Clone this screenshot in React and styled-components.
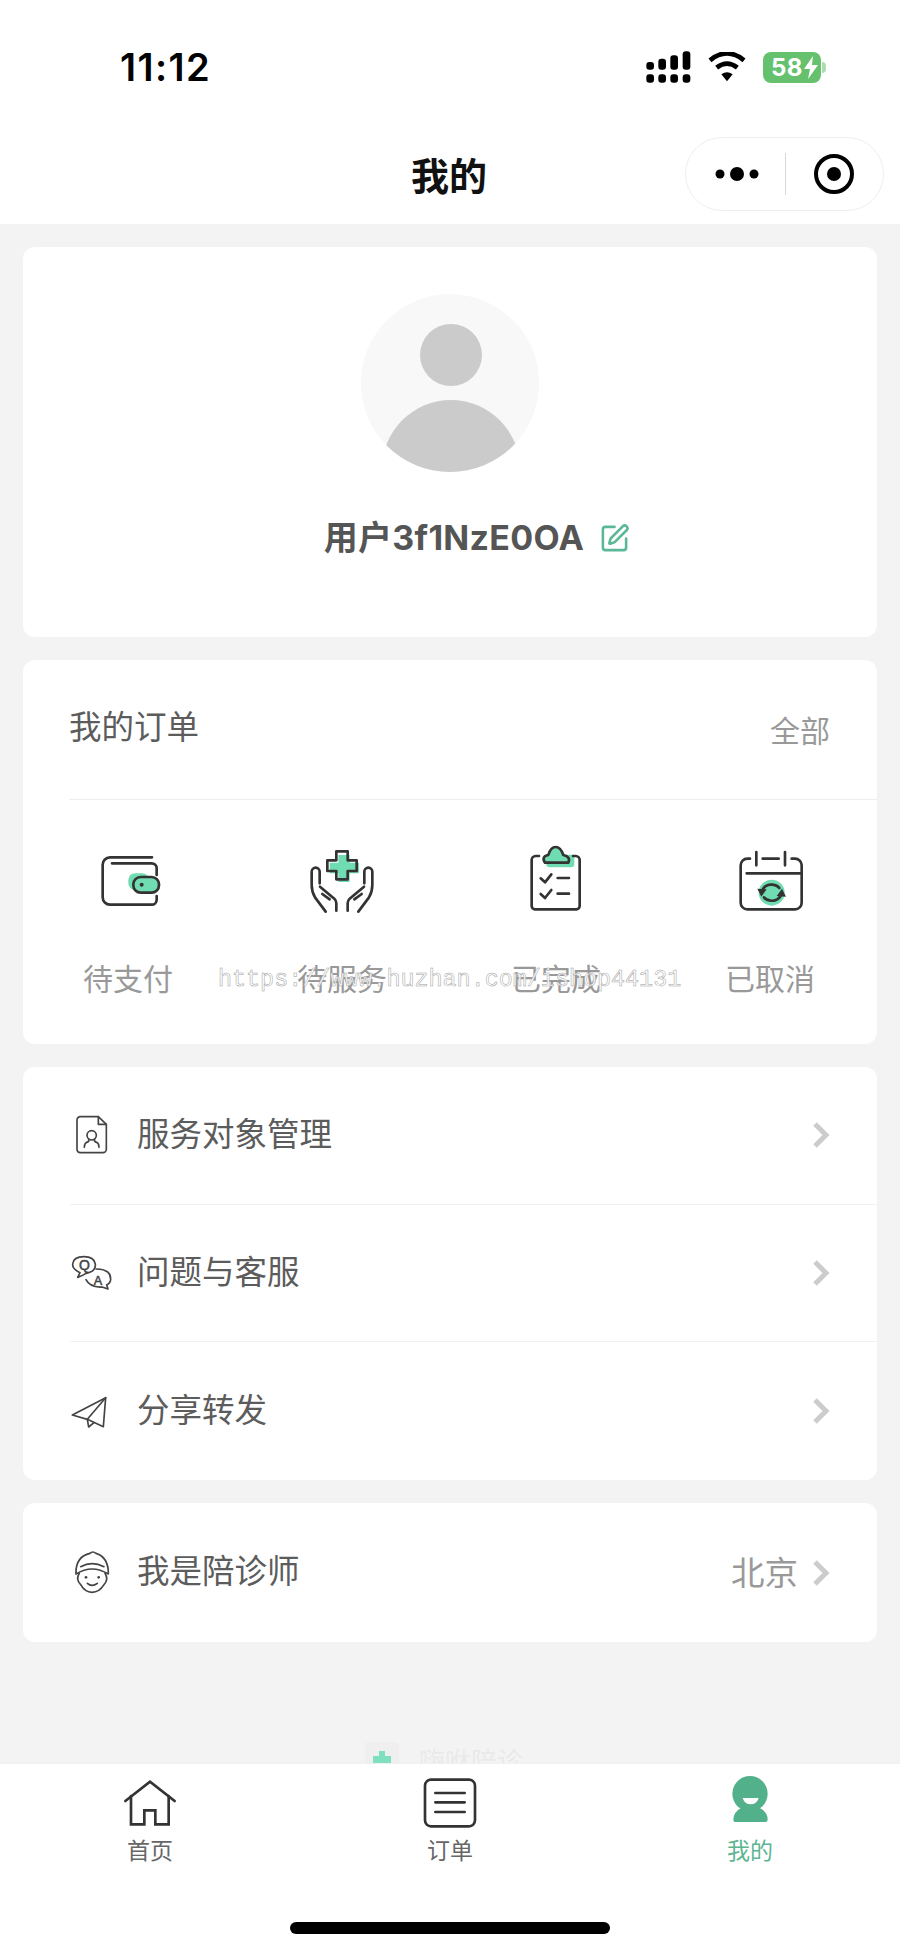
import React from "react";
import styled, { createGlobalStyle } from "styled-components";
import { SquarePen } from "lucide-react";

const Global = createGlobalStyle`
  html, body { margin: 0; padding: 0; background: #f3f3f3; }
  body { font-family: "Noto Sans CJK SC", "Noto Sans", sans-serif; }
  * { box-sizing: border-box; }
`;

const INK = "#333";
const MINT = "#6fdcb2";

const Page = styled.div`
  position: relative;
  width: 900px;
  height: 1951px;
  display: flex;
  flex-direction: column;
  background: #f3f3f3;
  overflow: hidden;
`;
const Header = styled.header`
  background: #fff;
  flex: none;
`;
const StatusBar = styled.div`
  height: 124px;
  padding: 10px 74px 0 120px;
  display: flex;
  align-items: center;
  justify-content: space-between;
`;
const Clock = styled.span`
  font-family: Inter, sans-serif;
  font-weight: 600;
  font-size: 38px;
  letter-spacing: 1.4px;
  color: #000;
`;
const StatusIcons = styled.div`
  display: flex;
  align-items: center;
  gap: 17px;
`;
const Battery = styled.div`
  position: relative;
  width: 58px;
  height: 31px;
  border-radius: 8px;
  background: #66c16f;
  margin-right: 5px;
  display: flex;
  align-items: center;
  padding-left: 8px;
  color: #fff;
  font-family: Inter, sans-serif;
  font-weight: 700;
  font-size: 24px;
  letter-spacing: 0.5px;
  &::after {
    content: "";
    position: absolute;
    right: -5px;
    top: 10px;
    width: 4px;
    height: 11px;
    border-radius: 0 4px 4px 0;
    background: #a9dcae;
  }
`;
const NavBar = styled.div`
  height: 100px;
  display: grid;
  grid-template-columns: 1fr auto 1fr;
  align-items: center;
  padding: 0 16px;
`;
const NavTitle = styled.h1`
  grid-column: 2;
  margin: 0;
  font-size: 38px;
  font-weight: 700;
  color: #111;
  line-height: 1;
  position: relative;
  left: -1px;
`;
const Capsule = styled.div`
  grid-column: 3;
  justify-self: end;
  width: 199px;
  height: 74px;
  border: 1px solid #eeeeee;
  border-radius: 37px;
  background: #fff;
  display: flex;
  align-items: center;
`;
const CapsuleSide = styled.div`
  flex: 1;
  height: 100%;
  display: flex;
  align-items: center;
  justify-content: center;
  & + & {
    position: relative;
    &::before {
      content: "";
      position: absolute;
      left: 0;
      top: 15px;
      bottom: 15px;
      width: 1px;
      background: #d8d8d8;
    }
  }
`;
const Main = styled.main`
  flex: 1;
  min-height: 0;
  overflow: hidden;
  padding: 23px 23px 0;
  display: flex;
  flex-direction: column;
  gap: 23px;
`;
const Card = styled.section`
  flex: none;
  background: #fff;
  border-radius: 12px;
`;
const ProfileCard = styled(Card)`
  height: 390px;
  padding-top: 47px;
  display: flex;
  flex-direction: column;
  align-items: center;
`;
const NameRow = styled.div`
  margin-top: 39px;
  display: flex;
  align-items: center;
  gap: 15px;
  padding-left: 54px;
`;
const UserName = styled.span`
  font-family: Inter, "Noto Sans CJK SC", sans-serif;
  font-weight: 700;
  font-size: 34px;
  letter-spacing: 0.3px;
  line-height: 54px;
  color: #555;
`;
const OrderCard = styled(Card)`
  height: 384px;
`;
const OrderHead = styled.div`
  height: 140px;
  margin-left: 46px;
  padding: 0 47px 10px 0;
  border-bottom: 1px solid #eeeeee;
  display: flex;
  align-items: center;
  justify-content: space-between;
`;
const OrderTitle = styled.span`
  font-size: 32.5px;
  color: #5c5c5c;
`;
const OrderAll = styled.span`
  font-size: 30px;
  color: #999;
  position: relative;
  top: 4px;
`;
const OrderGrid = styled.div`
  display: grid;
  grid-template-columns: repeat(4, 214px);
  padding: 45px 0 0 0;
  margin-left: -2px;
`;
const OrderItem = styled.div`
  display: flex;
  flex-direction: column;
  align-items: center;
  gap: 40px;
`;
const OrderLabel = styled.span`
  font-size: 30px;
  line-height: 44px;
  color: #999;
`;
const MenuCard = styled(Card)``;
const Row = styled.div`
  height: ${(p) => p.$h}px;
  margin-left: 47px;
  padding-right: 47px;
  display: flex;
  align-items: center;
  border-bottom: ${(p) => (p.$line ? "1px solid #f0f0f0" : "none")};
`;
const RowIcon = styled.div`
  width: 67px;
  flex: none;
  display: flex;
  align-items: center;
`;
const RowText = styled.span`
  flex: 1;
  font-size: 32.5px;
  color: #5c5c5c;
  margin-bottom: 8px;
`;
const RowValue = styled.span`
  font-size: 33.5px;
  color: #999;
  margin: 0 14px 5px 0;
`;
const Brand = styled.div`
  flex: none;
  margin-top: 77px;
  display: flex;
  justify-content: center;
  gap: 20px;
  padding-right: 12px;
`;
const BrandMark = styled.div`
  width: 34px;
  height: 40px;
  background: #efefef;
  border-radius: 4px;
  display: flex;
  justify-content: center;
  padding-top: 9px;
`;
const BrandText = styled.span`
  font-size: 26px;
  line-height: 36px;
  color: #e9e9e9;
  filter: blur(0.6px);
`;
const TabBar = styled.nav`
  flex: none;
  height: 188px;
  background: #fff;
  border-top: 1px solid #f0f0f0;
  display: flex;
  flex-direction: column;
  align-items: center;
`;
const Tabs = styled.div`
  width: 100%;
  display: grid;
  grid-template-columns: repeat(3, 300px);
  padding-top: 9px;
`;
const Tab = styled.div`
  display: flex;
  flex-direction: column;
  align-items: center;
`;
const TabLabel = styled.span`
  font-size: 23px;
  line-height: 32px;
  color: ${(p) => (p.$active ? "#5cb592" : "#666")};
`;
const HomeBar = styled.div`
  margin-top: 57px;
  width: 320px;
  height: 12px;
  border-radius: 6px;
  background: #000;
`;
const Watermark = styled.div`
  position: absolute;
  left: 218px;
  top: 962px;
  font-family: "Liberation Mono", monospace;
  font-size: 23.4px;
  line-height: 36px;
  white-space: nowrap;
  color: rgba(255, 255, 255, 0.9);
  -webkit-text-stroke: 0.5px #a0a0a0;
`;

const Signal = () => (
  <svg width="46" height="32" viewBox="46 62 136 96">
    {[[49, 95], [85, 85], [121, 75], [158, 63]].map(([x, y]) => (
      <g key={x} fill="#000">
        <rect x={x} y={y} width="23" height={118 - y} rx="9" />
        <rect x={x} y="132" width="23" height="25" rx="9" />
      </g>
    ))}
  </svg>
);
const Wifi = () => (
  <svg width="38" height="30" viewBox="232 67 114 90" fill="none" stroke="#000" strokeWidth="14">
    <path d="M238 92 Q289 50 340 92" />
    <path d="M258 114 Q289 90 320 114" />
    <path d="M289 155 L272 134 Q289 122 306 134 Z" fill="#000" stroke="none" />
  </svg>
);
const Bolt = () => (
  <svg width="14" height="23" viewBox="0 0 14 23" style={{ marginLeft: 1 }}>
    <path d="M9 0 L0 13 H6 L4 23 L14 9 H8 Z" fill="#fff" />
  </svg>
);
const Target = () => (
  <svg width="40" height="40" viewBox="0 0 40 40">
    <circle cx="20" cy="20" r="18" fill="none" stroke="#000" strokeWidth="4" />
    <circle cx="20" cy="20" r="7" fill="#000" />
  </svg>
);
const Dots = () => (
  <svg width="44" height="16" viewBox="0 0 44 16" style={{ marginLeft: 4 }}>
    <circle cx="5" cy="8" r="4.5" fill="#000" />
    <circle cx="22" cy="8" r="7" fill="#000" />
    <circle cx="39" cy="8" r="4.5" fill="#000" />
  </svg>
);
const Avatar = () => (
  <svg width="178" height="178" viewBox="0 0 178 178">
    <defs>
      <clipPath id="avatarClip">
        <circle cx="89" cy="89" r="89" />
      </clipPath>
    </defs>
    <circle cx="89" cy="89" r="89" fill="#f8f8f8" />
    <circle cx="90" cy="61" r="31" fill="#cbcbcb" />
    <circle cx="90" cy="175" r="69" fill="#cbcbcb" clipPath="url(#avatarClip)" />
  </svg>
);

const Line = { fill: "none", stroke: INK, strokeWidth: 8, strokeLinecap: "round", strokeLinejoin: "round" };

const WalletIcon = () => (
  <svg width="70" height="70" viewBox="99 75 210 210">
    <rect x="205" y="160" width="62" height="50" rx="20" fill={MINT} />
    <path {...Line} d="M276 112 H150 a22 22 0 0 0 -22 22 V232 a22 22 0 0 0 22 22 H275 a15 15 0 0 0 15 -15 V228" />
    <path {...Line} d="M156 130 H275 a15 15 0 0 1 15 15 V165" />
    <rect {...Line} x="220" y="171" width="77" height="47" rx="22" fill={MINT} />
    <circle cx="245" cy="194" r="6" fill={INK} />
  </svg>
);
const HandsIcon = () => {
  const hand = "M800 275 L768 232 Q758 215 758 195 V155 a12 12 0 0 1 24 0 V190 M783 200 L826 236 Q832 242 832 250 V272 M790 222 L812 238";
  return (
    <svg width="70" height="70" viewBox="744 75 210 210">
      <path d="M838 105 H872 V128 H900 V160 H872 V186 H838 V160 H812 V128 H838 Z" fill={MINT} />
      <path {...Line} d="M832 94 H866 V121 H893 V153 H866 V178 H832 V153 H805 V121 H832 Z" />
      <path {...Line} d={hand} />
      <path {...Line} d={hand} transform="translate(1698 0) scale(-1 1)" />
    </svg>
  );
};
const ClipboardIcon = () => (
  <svg width="70" height="70" viewBox="186 75 210 210">
    <rect x="262" y="104" width="84" height="38" rx="10" fill={MINT} />
    <path d="M260 128 Q252 110 270 106 Q276 84 290 84 Q305 84 312 106 Q332 110 328 128 Z" fill={MINT} />
    <path {...Line} d="M240 108 H230 a12 12 0 0 0 -12 12 V258 a10 10 0 0 0 10 10 H352 a10 10 0 0 0 10 -10 V120 a12 12 0 0 0 -12 -12 H342" />
    <path {...Line} d="M258 128 Q246 110 268 105 Q275 81 290 81 Q305 81 313 105 Q336 110 328 128 Z" />
    <path {...Line} d="M245 175 L258 187 L277 163 M296 174 H330 M245 222 L258 234 L277 210 M296 221 H330" />
  </svg>
);
const CalendarIcon = () => (
  <svg width="70" height="70" viewBox="825 75 210 210">
    <circle cx="935" cy="218" r="39" fill={MINT} />
    <path {...Line} d="M870 116 H862 a20 20 0 0 0 -20 20 V248 a20 20 0 0 0 20 20 H1005 a20 20 0 0 0 20 -20 V136 a20 20 0 0 0 -20 -20 H995" />
    <path {...Line} d="M889 96 V136 M975 96 V136 M908 116 H956 M860 160 H1022" />
    <path {...Line} d="M906 212 Q915 192 938 194 Q952 196 958 204 M964 224 Q955 244 932 242 Q918 240 912 232" />
    <path d="M892 206 L920 208 L904 230 Z M978 230 L950 228 L966 206 Z" fill={INK} />
  </svg>
);

const Thin = { fill: "none", stroke: "#444", strokeWidth: 5, strokeLinecap: "round", strokeLinejoin: "round" };
const Glyph = styled.text`
  font-family: "Liberation Sans", sans-serif;
  fill: #444;
  stroke: #444;
  stroke-width: 1.5px;
  text-anchor: middle;
`;
const DocIcon = () => (
  <svg width="40" height="40" viewBox="60 78 120 120">
    <path {...Thin} d="M145 83 H92 a10 10 0 0 0 -11 11 V180 a10 10 0 0 0 10 11 H159 a10 10 0 0 0 10 -10 V106 Z" />
    <path {...Thin} d="M145 83 V106 H169" />
    <circle {...Thin} cx="125" cy="139" r="14" />
    <path {...Thin} d="M116 153 Q118 158 110 160 Q103 164 103 175 M134 153 Q132 158 140 160 Q147 164 147 175" />
  </svg>
);
const QaIcon = () => (
  <svg width="42" height="40" viewBox="62 492 126 120">
    <path {...Thin} d="M85 565 L92 551 Q69 540 70 525 Q72 503 104 503 Q134 503 138 525 Q140 548 110 553 Q98 561 85 565 Z" />
    <path {...Thin} d="M140 540 Q184 540 184 570 Q184 582 172 588 L176 600 L158 594 Q122 596 110 572" fill="#fff" />
    <Glyph x="105" y="544" fontSize="42">Q</Glyph>
    <Glyph x="146" y="588" fontSize="38">A</Glyph>
  </svg>
);
const PlaneIcon = () => (
  <svg width="40" height="40" viewBox="60 303 120 120">
    <path {...Thin} d="M167 323 L67 375 L112 388 L160 410 Z" />
    <path {...Thin} d="M167 323 L112 388 L116 411 L132 398" />
  </svg>
);
const CapIcon = () => (
  <svg width="44" height="44" viewBox="60 783 132 132">
    <path {...Thin} d="M88 850 Q76 868 92 884 Q105 907 126 907 Q148 907 162 884 Q177 868 165 850" />
    <path {...Thin} d="M78 852 Q76 800 120 790 Q128 782 138 790 Q176 802 175 852 Q126 822 78 852 Z" />
    <path {...Thin} d="M92 830 Q126 812 162 830" />
    <circle cx="108" cy="862" r="4" fill="#444" />
    <circle cx="146" cy="862" r="4" fill="#444" />
    <path {...Thin} d="M112 880 Q126 892 142 880" />
  </svg>
);
const Chevron = () => (
  <svg width="18" height="28" viewBox="0 0 18 28">
    <path d="M3 3 L14 14 L3 25" fill="none" stroke="#ccc" strokeWidth="5" />
  </svg>
);
const HomeTab = () => (
  <svg width="60" height="60" viewBox="62 186 180 180">
    <path {...Line} strokeLinecap="round" strokeLinejoin="miter" d="M78 270 L152 212 L226 270" />
    <path {...Line} strokeLinejoin="miter" d="M95 255 V340 H135 V298 H168 V340 H208 V255" />
  </svg>
);
const OrderTab = () => (
  <svg width="60" height="60" viewBox="960 188 180 180">
    <rect {...Line} x="975" y="208" width="150" height="140" rx="18" />
    <path {...Line} d="M1006 248 H1094 M1006 276 H1094 M1006 305 H1094" />
  </svg>
);
const MineTab = () => (
  <svg width="60" height="60" viewBox="122 768 180 180">
    <circle cx="212" cy="830" r="53" fill="#52b08a" />
    <path d="M190 843 H238 Q232 862 214 862 Q196 862 190 843 Z" fill="#fff" />
    <path d="M186 872 Q212 890 240 872 Q265 885 265 908 Q265 915 258 915 H170 Q162 915 162 908 Q162 885 186 872 Z" fill="#52b08a" />
  </svg>
);

const orders = [
  { label: "待支付", Icon: WalletIcon },
  { label: "待服务", Icon: HandsIcon },
  { label: "已完成", Icon: ClipboardIcon },
  { label: "已取消", Icon: CalendarIcon },
];
const menu = [
  { label: "服务对象管理", Icon: DocIcon },
  { label: "问题与客服", Icon: QaIcon },
  { label: "分享转发", Icon: PlaneIcon },
];
const tabs = [
  { label: "首页", Icon: HomeTab },
  { label: "订单", Icon: OrderTab },
  { label: "我的", Icon: MineTab, active: true },
];

export default function App() {
  return (
    <Page>
      <Global />
      <Header>
        <StatusBar>
          <Clock>11:12</Clock>
          <StatusIcons>
            <Signal />
            <Wifi />
            <Battery>58<Bolt /></Battery>
          </StatusIcons>
        </StatusBar>
        <NavBar>
          <NavTitle>我的</NavTitle>
          <Capsule>
            <CapsuleSide><Dots /></CapsuleSide>
            <CapsuleSide><Target /></CapsuleSide>
          </Capsule>
        </NavBar>
      </Header>
      <Main>
        <ProfileCard>
          <Avatar />
          <NameRow>
            <UserName>用户3f1NzE0OA</UserName>
            <SquarePen size={31} color="#5bb896" strokeWidth={2} />
          </NameRow>
        </ProfileCard>
        <OrderCard>
          <OrderHead>
            <OrderTitle>我的订单</OrderTitle>
            <OrderAll>全部</OrderAll>
          </OrderHead>
          <OrderGrid>
            {orders.map(({ label, Icon }) => (
              <OrderItem key={label}>
                <Icon />
                <OrderLabel>{label}</OrderLabel>
              </OrderItem>
            ))}
          </OrderGrid>
        </OrderCard>
        <MenuCard>
          {menu.map(({ label, Icon }, i) => (
            <Row key={label} $h={137.7} $line={i < 2}>
              <RowIcon><Icon /></RowIcon>
              <RowText>{label}</RowText>
              <Chevron />
            </Row>
          ))}
        </MenuCard>
        <MenuCard>
          <Row $h={139}>
            <RowIcon><CapIcon /></RowIcon>
            <RowText>我是陪诊师</RowText>
            <RowValue>北京</RowValue>
            <Chevron />
          </Row>
        </MenuCard>
        <Brand>
          <BrandMark>
            <svg width="18" height="12" viewBox="0 0 18 12">
              <path d="M6 0 H12 V5 H18 V12 H0 V5 H6 Z" fill="#7fe0bf" />
            </svg>
          </BrandMark>
          <BrandText>嗨咻陪诊</BrandText>
        </Brand>
      </Main>
      <TabBar>
        <Tabs>
          {tabs.map(({ label, Icon, active }) => (
            <Tab key={label}>
              <Icon />
              <TabLabel $active={active}>{label}</TabLabel>
            </Tab>
          ))}
        </Tabs>
        <HomeBar />
      </TabBar>
      <Watermark>https://www.huzhan.com/ishop44131</Watermark>
    </Page>
  );
}
